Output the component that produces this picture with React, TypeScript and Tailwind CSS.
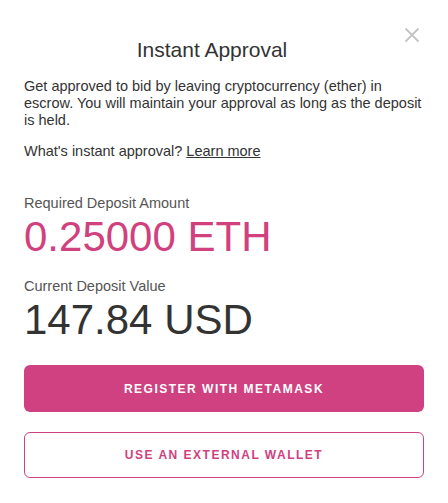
import React from 'react';

function CloseIcon() {
  return (
    <svg width="16" height="16" viewBox="0 0 16 16" fill="none" stroke="#c4c4c4" strokeWidth="1.8">
      <path d="M1.5 1.5 L14.5 14.5 M14.5 1.5 L1.5 14.5" />
    </svg>
  );
}

function App() {
  return (
    <div className="relative w-[448px] h-[503px] bg-white px-6 pt-9 text-[#333]" style={{ fontFamily: '"Liberation Sans", Arial, sans-serif' }}>
      {/* Close */}
      <button className="absolute top-[27px] right-[28px] p-0">
        <CloseIcon />
      </button>

      <h2 className="pr-6 text-center text-[21px] leading-[28px] text-[#333]">Instant Approval</h2>

      <p className="mt-[14px] text-[14.5px] leading-[17px]">
        Get approved to bid by leaving cryptocurrency (ether) in escrow. You will maintain your approval as long as the deposit is held.
      </p>
      <p className="mt-[14px] text-[14.5px] leading-[17px]">
        What's instant approval? <a className="underline">Learn more</a>
      </p>

      {/* Amounts */}
      <div className="mt-[35px] text-[14.5px] leading-[17px] text-[#555]">Required Deposit Amount</div>
      <div className="mt-[4px] text-[42px] leading-[42px] text-[#d0417e]">0.25000 ETH</div>

      <div className="mt-[20px] text-[14.5px] leading-[17px] text-[#555]">Current Deposit Value</div>
      <div className="mt-[4px] text-[42px] leading-[42px] text-[#333]">147.84 USD</div>

      {/* Actions */}
      <button className="mt-[24px] flex h-[47px] w-full items-center justify-center rounded-md bg-[#cf4180] text-[12px] font-bold tracking-[1.5px] text-white">
        REGISTER WITH METAMASK
      </button>
      <button className="mt-[20px] flex h-[46px] w-full items-center justify-center rounded-md border border-[#cf4180] bg-white text-[12px] font-bold tracking-[1.5px] text-[#cf4180]">
        USE AN EXTERNAL WALLET
      </button>
    </div>
  );
}

export default App;
